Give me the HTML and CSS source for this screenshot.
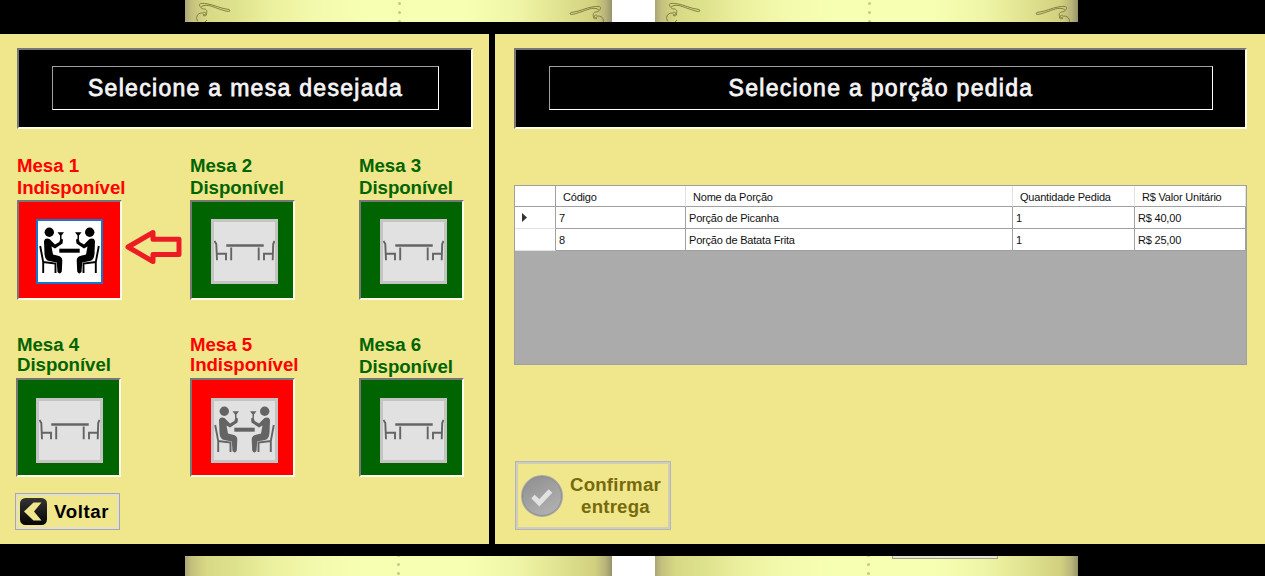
FILE: index.html
```
<!DOCTYPE html>
<html lang="pt-BR">
<head>
<meta charset="utf-8">
<title>Confirmar entrega</title>
<link rel="stylesheet" href="styles.css">
</head>
<body>
<svg class="defs" aria-hidden="true">
  <symbol id="flourish" viewBox="0 0 40 22">
    <path d="M5.500 7C2 3 7 3 12 3.800C20 5 25 8.500 34 9.500C37 11.500 33 12 29 10.500C20 8 15 4.500 9 5.500C4 7 6 9 9.500 9C14 10 11 16 8.500 14.500C6 12 10 11 11.500 14C12 16 10 16 8 15.500M7 13C2 13 0 18 3 21.500M12 20L10 22" fill="none" stroke="#77763a" stroke-width=".9"/>
  </symbol>
  <symbol id="diners" viewBox="0 0 61 59">
    <g id="diner" fill="currentColor">
      <circle cx="10.300" cy="10.300" r="4.700"/>
      <path d="M5 19Q6 15.500 10.500 17L16 22.500L20.300 20L21.500 16.500L24 17.500L23.500 21.500L16 26.500L12.500 24.500L14 32.500L20 34Q23.300 35 23.300 38.500L22.800 49.500Q21 53 18.500 50L17.800 40.500L10 39Q6 38 5.500 32Z"/>
      <path d="M18.500 10.300H25L22.500 13.500V17H21V13.500Z"/>
      <path d="M1.200 24L4.200 40V51M4 40L16.500 41.500V51" fill="none" stroke="currentColor" stroke-width="1.900"/>
    </g>
    <use href="#diner" transform="matrix(-1 0 0 1 61 0)"/>
    <rect x="20.300" y="26.700" width="20.400" height="4" fill="currentColor"/>
  </symbol>
  <symbol id="table" viewBox="0 0 61 59">
    <g fill="none" stroke="currentColor">
      <path d="M12.300 23.500H49.700" stroke-width="2.600"/>
      <path d="M17.200 25.500V38.300M44.700 25.500V38.300" stroke-width="1.900"/>
      <path d="M0.500 19L2.300 22L3 38.300M3 31.800H12V38.300M60.500 19L59.200 22L58.700 38.300M58.700 31.800H50V38.300" stroke-width="1.900"/>
    </g>
  </symbol>
</svg>
<div class="screen">
  <div class="strip strip-top">
    <div class="page page-left">
      <svg class="flourish"><use href="#flourish"/></svg>
      <div class="dots"><i></i><i></i><i></i></div>
      <svg class="flourish flipped"><use href="#flourish"/></svg>
    </div>
    <div class="page page-right">
      <svg class="flourish"><use href="#flourish"/></svg>
      <div class="dots"><i></i><i></i><i></i></div>
      <svg class="flourish flipped"><use href="#flourish"/></svg>
    </div>
  </div>

  <div class="panels">
    <section class="panel tables-panel">
      <header class="banner"><h1 class="banner-title title-tables"><span>Selecione a mesa desejada</span></h1></header>
      <div class="tables">
        <div class="mesa busy selected">
          <div class="label"><span>Mesa 1</span><span>Indisponível</span></div>
          <div class="tile"><button class="picture"><svg><use href="#diners"/></svg></button></div>
          <svg class="arrow" viewBox="0 0 60 38"><path d="M3 19L28 4.500V11.300H54V26.500H28V33.500Z" fill="none" stroke="#ed1c24" stroke-width="5" stroke-linejoin="round"/></svg>
        </div>
        <div class="mesa free">
          <div class="label"><span>Mesa 2</span><span>Disponível</span></div>
          <div class="tile"><button class="picture"><svg><use href="#table"/></svg></button></div>
        </div>
        <div class="mesa free">
          <div class="label"><span>Mesa 3</span><span>Disponível</span></div>
          <div class="tile"><button class="picture"><svg><use href="#table"/></svg></button></div>
        </div>
        <div class="mesa free lower shifted tight">
          <div class="label"><span>Mesa 4</span><span>Disponível</span></div>
          <div class="tile"><button class="picture"><svg><use href="#table"/></svg></button></div>
        </div>
        <div class="mesa busy lower tight">
          <div class="label"><span>Mesa 5</span><span>Indisponível</span></div>
          <div class="tile"><button class="picture"><svg><use href="#diners"/></svg></button></div>
        </div>
        <div class="mesa free lower">
          <div class="label"><span>Mesa 6</span><span>Disponível</span></div>
          <div class="tile"><button class="picture"><svg><use href="#table"/></svg></button></div>
        </div>
      </div>
      <button class="back">
        <svg class="back-icon" viewBox="0 0 27 27"><defs><linearGradient id="dark" x2="0" y2="1"><stop stop-color="#343434"/><stop offset=".5" stop-color="#1c1c1c"/><stop offset="1" stop-color="#060606"/></linearGradient></defs><rect width="27" height="27" rx="5.500" fill="url(#dark)"/><path d="M4 13.500L13.500 4.500H21.500L14 13.500L21.500 22.500H13.500Z" fill="#f0e68c"/></svg>
        <span>Voltar</span>
      </button>
    </section>

    <section class="panel orders-panel">
      <header class="banner"><h1 class="banner-title title-orders"><span>Selecione a porção pedida</span></h1></header>
      <div class="grid-box">
        <table class="orders">
          <colgroup><col class="c-mark"><col class="c-code"><col class="c-name"><col class="c-qty"><col class="c-price"></colgroup>
          <thead><tr><th></th><th>Código</th><th>Nome da Porção</th><th>Quantidade Pedida</th><th>R$ Valor Unitário</th></tr></thead>
          <tbody>
            <tr><td><svg class="marker" viewBox="0 0 5 9"><path d="M0 0L5 4.500L0 9Z" fill="#333"/></svg></td><td>7</td><td>Porção de Picanha</td><td>1</td><td>R$ 40,00</td></tr>
            <tr><td></td><td>8</td><td>Porção de Batata Frita</td><td>1</td><td>R$ 25,00</td></tr>
          </tbody>
        </table>
      </div>
      <button class="confirm" disabled>
        <svg class="check" viewBox="0 0 42 42"><defs><linearGradient id="gray" x2=".6" y2="1"><stop stop-color="#8d8d8d"/><stop offset="1" stop-color="#b0b0b0"/></linearGradient></defs><circle cx="21" cy="21" r="20.300" fill="url(#gray)" stroke="#aaa" stroke-width="1.400"/><circle cx="21" cy="21" r="19.500" fill="none" stroke="#858585" stroke-width=".7"/><path d="M12 21.500L18.300 27.800L29.500 16" fill="none" stroke="#e2e2e2" stroke-width="5"/></svg>
        <span class="confirm-text"><span>Confirmar</span><span>entrega</span></span>
      </button>
    </section>
  </div>

  <div class="strip strip-bottom">
    <div class="page page-left"><div class="dots"><i></i><i></i><i></i></div></div>
    <div class="page page-right"><div class="dots"><i></i><i></i><i></i></div><div class="tab"></div></div>
  </div>
</div>
</body>
</html>
```
FILE: styles.css
```
* { box-sizing: border-box; }
body { margin: 0; background: #000; font-family: "Liberation Sans", Arial, sans-serif; }
button { font: inherit; margin: 0; padding: 0; background: none; border: 0; }
svg { display: block; }
.defs { position: absolute; width: 0; height: 0; }
.screen { width: 1265px; height: 576px; overflow: hidden; display: flex; flex-direction: column; gap: 12px; background: #000; }

.strip { display: flex; width: 893px; margin-left: 185px; background: #fff; gap: 43px; }
.strip-top { height: 22px; }
.strip-bottom { height: 20px; }
.page { position: relative; display: flex; justify-content: space-between; overflow: hidden;
  background: linear-gradient(90deg, #aaa579 0, #c3c07c 1.5%, #d8d984 5%, #dfe28d 12%, #ebf09e 20%, #f4faad 31%, #f7ffb2 42%, #f7ffb2 66%, #eff5a6 78%, #dee08d 89%, #d1d07f 96%, #b8b379 98.500%, #96936c 100%); }
.page-left { width: 427px; }
.page-right { width: 423px; }
.flourish { width: 40px; height: 22px; margin-left: 10px; }
.flipped { transform: scaleX(-1) translateY(3px); margin: 0 7px 0 0; }
.dots { position: absolute; left: 213px; top: 2px; display: flex; flex-direction: column; gap: 6px; }
.dots i { width: 3px; height: 3px; border-radius: 50%; background: #c5ca82; }
.strip-bottom .dots { left: 212px; top: -2px; }
.tab { position: absolute; left: 237px; top: 0; width: 106px; height: 3px; background: #e5e5d8; border: 1px solid #a3a38c; border-top: 0; }

.panels { display: flex; gap: 6px; height: 510px; }
.panel { background: #f0e68c; }
.tables-panel { width: 489px; padding: 14px 16px 0 17px; }
.orders-panel { width: 770px; padding: 14px 18px 0 19px; }
.banner { height: 81px; padding: 16px 32px 0 33px; background: #000; border: 2px solid #fffde8; border-top-color: #777; border-left-color: #777; }
.banner-title { margin: 0; height: 44px; border: 1px solid #fff; border-top-color: #a0a0a0; border-left-color: #a0a0a0;
  font-size: 23px; font-weight: normal; -webkit-text-stroke: .8px currentColor; line-height: 42px; text-align: center; color: #f4f4f4; white-space: nowrap; letter-spacing: 1.300px; }

.tables { display: grid; grid-template-columns: 173px 169px 105px; margin-top: 26px; row-gap: 34px; }
.mesa { position: relative; width: 105px; }
.label { display: flex; flex-direction: column; height: 45px; font-size: 18.670px; font-weight: bold; line-height: 22px; letter-spacing: -.04px; white-space: nowrap; }
.lower .label { height: 44px; }
.tight .label span + span { margin-top: -2px; }
.busy .label { color: #f00; }
.free .label { color: #006400; }
.tile { width: 105px; height: 100px; padding: 17px; border: 2px solid #fffde8; border-top-color: #777; border-left-color: #777; }
.lower .tile { height: 99px; padding-top: 18px; padding-bottom: 14px; }
.busy .tile { background: #f00; }
.free .tile { background: #006400; }
.shifted .tile { margin-left: -1px; }
.picture { display: block; width: 67px; height: 65px; margin-left: 2px; border: 3px solid #c4c4c4; background: #e1e1e1; color: #646464; }
.selected .picture { background: #fff; border: 2px solid #1874cd; padding: 1px; color: #000; margin-left: 0; }
.shifted .picture { margin-left: 1px; }
.picture svg { width: 61px; height: 59px; }
.arrow { position: absolute; left: 108px; top: 73px; width: 60px; height: 38px; z-index: 1; }

.back { display: flex; align-items: center; width: 105px; height: 37px; margin: 16px 0 0 -2px; padding-left: 3px; gap: 7px; border: 1px solid #a8a8a8; box-shadow: inset 0 0 0 2px #e2e0cc; font-size: 18.670px; font-weight: bold; color: #000; letter-spacing: .6px; }
.back-icon { width: 27px; height: 27px; margin-left: 1px; }

.grid-box { height: 180px; margin-top: 56px; background: #ababab; border: 1px solid #a0a0a0; }
.orders { width: 731px; table-layout: fixed; border-collapse: separate; border-spacing: 0; background: #fff; font-size: 11px; letter-spacing: -.2px; color: #111; }
.c-mark { width: 41px; }
.c-code { width: 130px; }
.c-name { width: 327px; }
.c-qty { width: 122px; }
.c-price { width: 111px; }
.orders th, .orders td { padding: 0 0 0 3px; font-weight: normal; text-align: left; white-space: nowrap; border-right: 1px solid #a0a0a0; border-bottom: 1px solid #a0a0a0; }
.orders th { height: 21px; padding: 2px 0 0 7px; border-right-color: #e2e2e2; }
.orders th:first-child { border-right-color: #a0a0a0; }
.orders td { height: 22px; }
.orders td:first-child { padding-left: 7px; border-bottom-color: #e2e2e2; }
.marker { width: 5px; height: 9px; }

.confirm { display: flex; align-items: center; width: 156px; height: 69px; margin: 96px 0 0 1px; padding-left: 3px; gap: 7px; border: 1px solid #b5b5b5; box-shadow: inset 0 0 0 2px #cfcdbd; color: #756a0c; font-size: 18.670px; font-weight: bold; line-height: 22px; letter-spacing: .2px; }
.check { width: 42px; height: 42px; margin-left: 2px; }
.confirm-text { display: flex; flex-direction: column; align-items: center; }
```
